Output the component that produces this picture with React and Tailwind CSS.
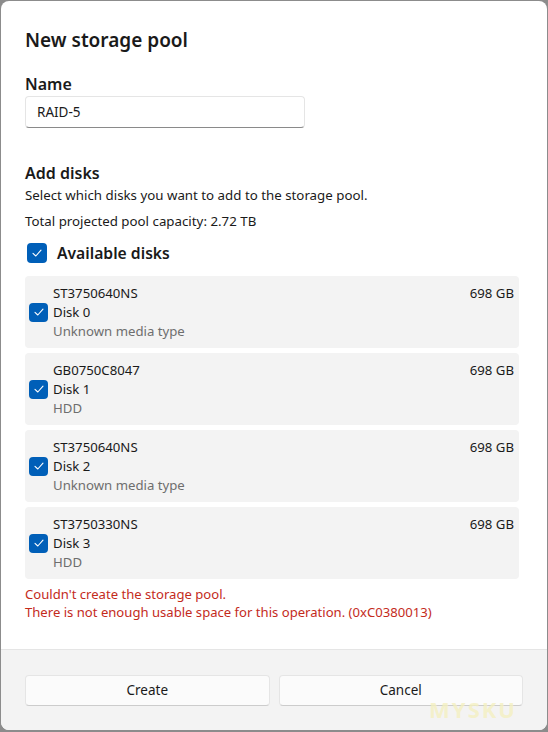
import React from 'react';

// Caixa de seleção no estilo Windows 11
const Check = ({ className = '' }) => (
  <div className={`w-[19px] h-[19px] rounded-[4px] bg-[#005fb8] flex items-center justify-center shrink-0 ${className}`}>
    <svg width="12" height="12" viewBox="0 0 12 12" fill="none">
      <path d="M2 6.3 L4.8 9 L10 3.2" stroke="white" strokeWidth="1.1" strokeLinecap="round" strokeLinejoin="round" />
    </svg>
  </div>
);

const disks = [
  { model: 'ST3750640NS', name: 'Disk 0', type: 'Unknown media type' },
  { model: 'GB0750C8047', name: 'Disk 1', type: 'HDD' },
  { model: 'ST3750640NS', name: 'Disk 2', type: 'Unknown media type' },
  { model: 'ST3750330NS', name: 'Disk 3', type: 'HDD' },
];

const DiskCard = ({ disk }) => (
  <div className="flex items-center bg-[#f3f3f3] rounded-[4px] pl-[4px] pr-[5px] h-[72px]">
    <Check />
    <div className="flex-1 pl-[5px] pt-[1px] text-[13.2px] leading-[19px] text-[#1a1a1a]">
      <div>{disk.model}</div>
      <div>{disk.name}</div>
      <div className="text-[#6e6e6e]">{disk.type}</div>
    </div>
    <div className="self-start pt-[8px] text-[13.2px] leading-[19px] text-[#1a1a1a]">698 GB</div>
  </div>
);

export default function App() {
  return (
    <div
      className="w-[548px] h-[732px] bg-[#8c8c8c] pt-[1px] px-[1px] pb-[2px]"
      style={{ fontFamily: '"Noto Sans", "Open Sans", sans-serif' }}
    >
      <div className="relative h-full bg-white rounded-[8px] flex flex-col overflow-hidden">
        <div className="flex-1 px-[24px] pt-[26px]">
          <h1 className="text-[19px] leading-[26px] font-semibold text-[#1a1a1a]">New storage pool</h1>

          <div className="mt-[20px] text-[16px] leading-[22px] font-semibold text-[#1a1a1a]">Name</div>
          <div className="mt-[1px] w-[280px] h-[32px] border border-[#e5e5e5] border-b-[#8a8a8a] rounded-[4px] flex items-center px-[11px] text-[13.5px] text-[#1a1a1a]">
            RAID-5
          </div>

          <div className="mt-[34px] text-[16px] leading-[22px] font-semibold text-[#1a1a1a]">Add disks</div>
          <div className="mt-[2px] text-[13.3px] leading-[19px] text-[#1a1a1a]">Select which disks you want to add to the storage pool.</div>
          <div className="mt-[7px] text-[13.3px] leading-[19px] text-[#1a1a1a]">Total projected pool capacity: 2.72 TB</div>

          <div className="mt-[11px] flex items-center gap-[10px] pl-[2px]">
            <Check className="w-[20px] h-[20px]" />
            <span className="text-[15.7px] leading-[22px] font-semibold text-[#1a1a1a]">Available disks</span>
          </div>

          <div className="mt-[12px] mr-[4px] flex flex-col gap-[5px]">
            {disks.map((d, i) => (
              <DiskCard key={i} disk={d} />
            ))}
          </div>

          <div className="mt-[6px] text-[13.1px] leading-[18px] text-[#c42b1c]">
            <div>Couldn't create the storage pool.</div>
            <div>There is not enough usable space for this operation. (0xC0380013)</div>
          </div>
        </div>

        <div className="h-[81px] bg-[#f3f3f3] border-t border-[#e5e5e5] flex items-start gap-[9px] px-[24px] pt-[25px]">
          <button className="flex-1 h-[31px] bg-[#fbfbfb] border border-[#e5e5e5] border-b-[#cccccc] rounded-[4px] text-[13.5px] text-[#1a1a1a]">
            Create
          </button>
          <button className="flex-1 h-[31px] bg-[#fbfbfb] border border-[#e5e5e5] border-b-[#cccccc] rounded-[4px] text-[13.5px] text-[#1a1a1a]">
            Cancel
          </button>
        </div>

        <div className="absolute right-[30px] bottom-[4px] text-[22px] font-bold tracking-[2px] text-[#f4f0c0]/80">
          MYSKU
        </div>
      </div>
    </div>
  );
}
